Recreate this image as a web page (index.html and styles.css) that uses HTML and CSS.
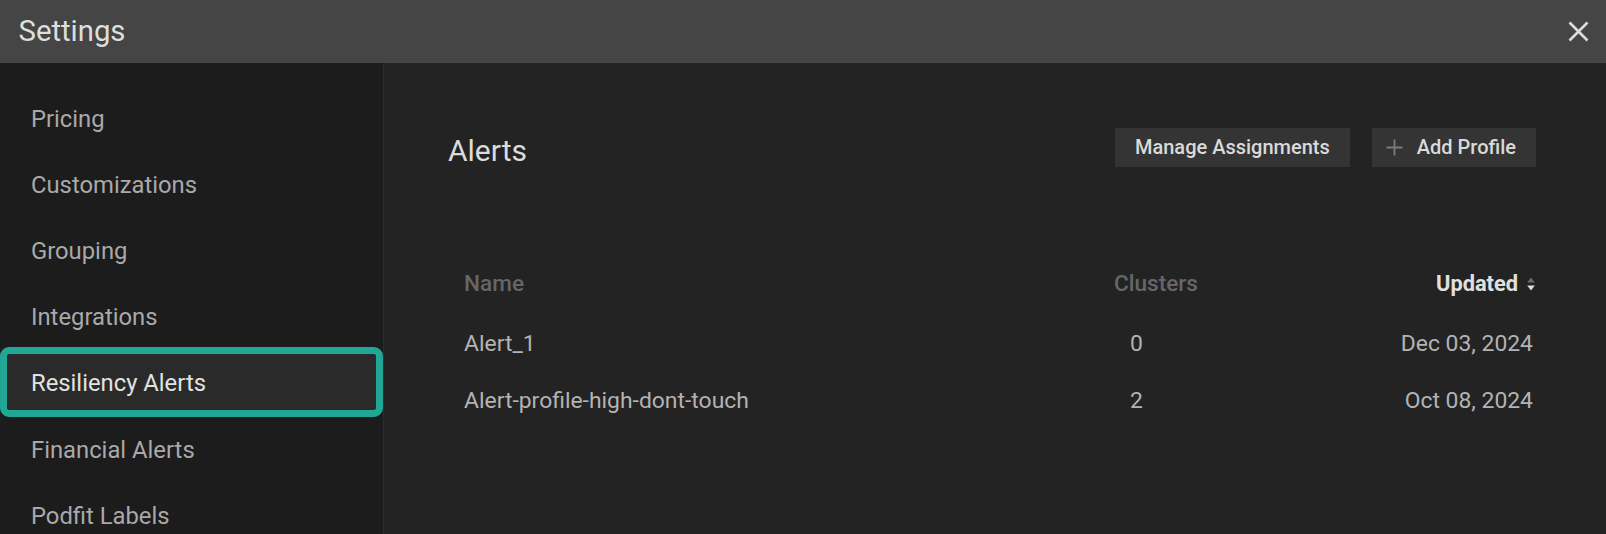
FILE: index.html
```html
<!DOCTYPE html>
<html lang="en">
<head>
<meta charset="utf-8">
<title>Settings</title>
<link rel="stylesheet" href="styles.css">
</head>
<body>
<div class="modal">
  <header class="modal-header">
    <h1 class="modal-title">Settings</h1>
    <button class="close-btn" aria-label="Close">
      <svg width="21" height="21" viewBox="0 0 21 21"><path d="M1.5 1.5 L19.5 19.5 M19.5 1.5 L1.5 19.5" stroke="#dcdcdc" stroke-width="2.6" stroke-linecap="butt" fill="none"/></svg>
    </button>
  </header>
  <div class="modal-body">
    <nav class="sidebar">
      <a class="nav-item">Pricing</a>
      <a class="nav-item">Customizations</a>
      <a class="nav-item">Grouping</a>
      <a class="nav-item">Integrations</a>
      <a class="nav-item is-active">Resiliency Alerts</a>
      <a class="nav-item">Financial Alerts</a>
      <a class="nav-item">Podfit Labels</a>
    </nav>
    <main class="content">
      <div class="content-head">
        <h2 class="content-title">Alerts</h2>
        <div class="actions">
          <button class="btn">Manage Assignments</button>
          <button class="btn btn-icon">
            <svg class="plus" width="17" height="17" viewBox="0 0 17 17"><path d="M8.5 0.5 V16.5 M0.5 8.5 H16.5" stroke="#7a7a7a" stroke-width="1.8" fill="none"/></svg>
            <span>Add Profile</span>
          </button>
        </div>
      </div>
      <div class="table">
        <div class="row row-head">
          <div class="cell">Name</div>
          <div class="cell">Clusters</div>
          <div class="cell cell-sorted"><span>Updated</span><svg class="sort" width="8" height="14" viewBox="0 0 8 14"><path d="M4 0.5 L7.8 5.5 H0.2 Z" fill="#6a6a6a"/><path d="M4 13.5 L7.8 8.5 H0.2 Z" fill="#dddddd"/></svg></div>
        </div>
        <div class="row">
          <div class="cell">Alert_1</div>
          <div class="cell cell-num">0</div>
          <div class="cell cell-right cell-date">Dec 03, 2024</div>
        </div>
        <div class="row">
          <div class="cell">Alert-profile-high-dont-touch</div>
          <div class="cell cell-num">2</div>
          <div class="cell cell-right cell-date">Oct 08, 2024</div>
        </div>
      </div>
    </main>
  </div>
</div>
</body>
</html>
```
FILE: styles.css
```css
* { box-sizing: border-box; }
html, body {
  margin: 0;
  padding: 0;
  height: 100%;
  background: #232323;
  font-family: Roboto, "Liberation Sans", Arial, sans-serif;
  overflow: hidden;
}
.modal {
  display: flex;
  flex-direction: column;
  height: 534px;
}
.modal-header {
  height: 63px;
  flex: 0 0 63px;
  background: #454545;
  display: flex;
  align-items: center;
  justify-content: space-between;
  padding: 0 17px 0 18.5px;
}
.modal-title {
  margin: 0;
  font-size: 29.3px;
  font-weight: 400;
  color: #dedede;
  line-height: 1;
}
.close-btn {
  background: none;
  border: 0;
  padding: 0;
  width: 21px;
  height: 21px;
  display: flex;
  cursor: pointer;
}
.modal-body {
  flex: 1;
  display: flex;
  min-height: 0;
}
.sidebar {
  width: 384px;
  flex: 0 0 384px;
  background: #1c1c1c;
  border-right: 1px solid #2d2d2d;
  padding-top: 23px;
  display: flex;
  flex-direction: column;
}
.nav-item {
  height: 66.1px;
  flex: 0 0 66.1px;
  display: flex;
  align-items: center;
  padding-left: 31px;
  font-size: 23.8px;
  color: #a9a9a9;
  cursor: pointer;
}
.nav-item.is-active {
  height: 70px;
  flex: 0 0 70px;
  margin: -3px 0 -0.9px;
  border: 7px solid #21a795;
  border-radius: 9px;
  background: #2a2a2a;
  padding-left: 24px;
  padding-top: 2px;
  color: #e2e2e2;
}
.content {
  flex: 1;
  padding: 65px 70px 0 64px;
  background: #232323;
}
.content-head {
  display: flex;
  justify-content: space-between;
  align-items: flex-start;
}
.content-title {
  margin: 5px 0 0;
  font-size: 30px;
  line-height: 36px;
  font-weight: 400;
  color: #dcdcdc;
}
.actions {
  display: flex;
  gap: 22px;
}
.btn {
  height: 38.5px;
  background: #343434;
  border: 0;
  border-radius: 0;
  padding: 0 20px;
  font-family: Roboto, "Liberation Sans", Arial, sans-serif;
  font-size: 20px;
  font-weight: 500;
  color: #dadada;
  display: flex;
  align-items: center;
  cursor: pointer;
}
.btn-icon {
  padding-left: 14px;
  gap: 14px;
}
.table {
  margin: 87px 0 0 16px;
}
.row {
  display: grid;
  grid-template-columns: 650px 1fr 240px;
  height: 56.5px;
  align-items: center;
  font-size: 22.9px;
  color: #b3b3b3;
}
.row-head {
  height: 59.5px;
  align-items: start;
  line-height: 56px;
  font-size: 22.6px;
  font-weight: 500;
  color: #666666;
}
.cell-right {
  text-align: right;
}
.cell-num {
  padding-left: 16px;
}
.cell-date {
  padding-right: 3px;
}
.cell-sorted {
  display: flex;
  justify-content: flex-end;
  align-items: center;
  gap: 9px;
  height: 56px;
  color: #e0e0e0;
  font-size: 21.8px;
  font-weight: 700;
  padding-right: 1px;
}
.sort {
  flex: 0 0 auto;
}
```
